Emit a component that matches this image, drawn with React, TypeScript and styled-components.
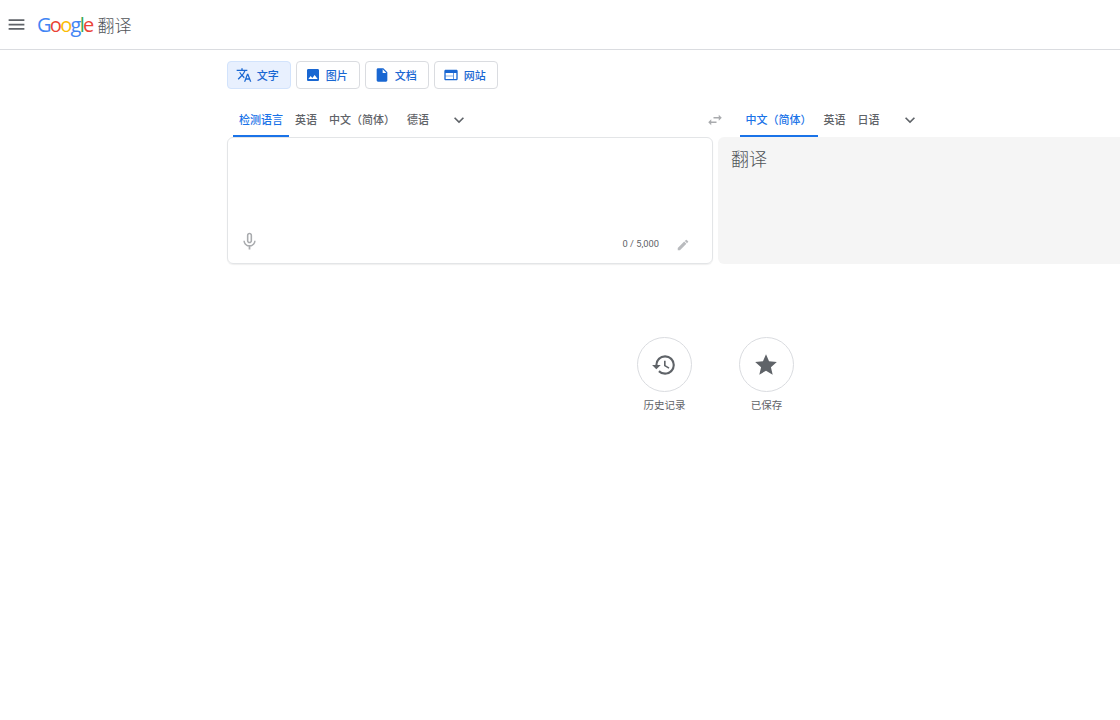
import React from "react";
import styled, { createGlobalStyle } from "styled-components";
import { MdMenu, MdTranslate, MdImage, MdInsertDriveFile, MdWeb, MdSwapHoriz, MdMicNone, MdEdit, MdHistory, MdStar, MdKeyboardArrowDown } from "react-icons/md";

const Global = createGlobalStyle`
  html, body { margin: 0; padding: 0; background: #fff; overflow: hidden; width: 1120px; height: 720px; }
  body { font-family: Roboto, "Noto Sans CJK SC", sans-serif; color: #5f6368; }
`;
const Page = styled.div`width: 1120px; height: 720px; overflow: hidden; display: flex; flex-direction: column;`;
const Header = styled.header`height: 49px; border-bottom: 1px solid #dadce0; display: flex; align-items: center; padding-left: 6px; flex: none;`;
const MenuIcon = styled(MdMenu)`font-size: 21px; color: #5f6368;`;
const Logo = styled.div`margin-left: 10px; display: flex; align-items: center; gap: 5px;`;
const LogoWord = styled.span`font-family: "Open Sans", sans-serif; font-size: 20px; letter-spacing: -1.7px; line-height: 24px; font-weight: 500;`;
const Letter = styled.span<{ $c: string }>`color: ${p => p.$c};`;
const LogoTitle = styled.span`font-family: "Noto Sans CJK SC", sans-serif; font-size: 17px; font-weight: 300; color: #505458; line-height: 24px;`;
const Main = styled.main`padding-left: 227px; display: flex; flex-direction: column;`;
const Tabs = styled.div`display: flex; gap: 5.5px; margin-top: 11px;`;
const Tab = styled.button<{ $active?: boolean }>`
  width: 63.5px; height: 28px; box-sizing: border-box; border-radius: 4px; padding: 0 3px 0 0; display: flex; align-items: center; justify-content: center; gap: 5px;
  background: ${p => p.$active ? "#e8f0fe" : "#fff"}; border: 1px solid ${p => p.$active ? "#d2e3fc" : "#dadce0"};
  color: #1967d2; font-family: Roboto, "Noto Sans CJK SC", sans-serif; font-size: 11px; font-weight: 500;
  svg { font-size: 16px; }
`;
const LangGrid = styled.div`display: grid; grid-template-columns: 486px 491px; column-gap: 5px; margin-top: 12px; width: 982px;`;
const LangBar = styled.div`display: flex; height: 36px; align-items: stretch; box-sizing: border-box;`;
const LeftBar = styled(LangBar)`padding-left: 6px;`;
const Lang = styled.div<{ $active?: boolean; $gap?: number }>`
  display: flex; align-items: center; padding: 1px 6px 0; font-size: 11px; font-weight: 500; white-space: nowrap; box-sizing: border-box;
  color: ${p => p.$active ? "#1a73e8" : "#5f6368"};
  border-bottom: 2px solid ${p => p.$active ? "#1a73e8" : "transparent"};
  margin-right: ${p => p.$gap ?? 0}px;
`;
const Chevron = styled(MdKeyboardArrowDown)`font-size: 20px; align-self: center; color: #5f6368; margin-top: 1px;`;
const Swap = styled(MdSwapHoriz)`font-size: 18px; color: #a9abae; align-self: center; margin-left: -12px; margin-right: 15.5px; margin-top: 1px; flex: none;`;
const Panels = styled.div`display: grid; grid-template-columns: 486px 491px; column-gap: 5px; width: 982px;`;
const SourcePanel = styled.div`height: 127px; box-sizing: border-box; border: 1px solid #e3e5e7; border-radius: 6px; display: flex; align-items: flex-end; justify-content: space-between; box-shadow: 0 1px 1px rgba(60,64,67,.08);`;
const TargetPanel = styled.div`height: 127px; box-sizing: border-box; background: #f5f5f5; border-radius: 6px 0 0 6px; padding: 8px 13px; font-family: "Noto Sans CJK SC", sans-serif; font-size: 18px; font-weight: 300; line-height: 26px; color: #505458;`;
const Mic = styled(MdMicNone)`font-size: 21px; color: #a9abae; margin: 0 0 11px 11px;`;
const Counter = styled.div`display: flex; align-items: center; margin: 0 22px 11px 0; font-size: 9.3px; color: #5f6368;`;
const Pen = styled(MdEdit)`font-size: 14px; color: #b9bbbe; margin-left: 17px; margin-top: 3px;`;
const Shortcuts = styled.div`display: flex; gap: 47px; margin: 73px 0 0 410px;`;
const Shortcut = styled.div`width: 55px; display: flex; flex-direction: column; align-items: center;`;
const Circle = styled.div`width: 55px; height: 55px; box-sizing: border-box; border-radius: 50%; border: 1px solid #dadce0; display: flex; align-items: center; justify-content: center; color: #5f6368; svg { font-size: 26px; margin-left: -1px; }`;
const Label = styled.div`margin-top: 7px; font-size: 10.5px; line-height: 14px; white-space: nowrap; color: #5f6368; font-weight: 400;`;

export default function App() {
  return (
    <Page>
      <Global />
      <Header>
        <MenuIcon />
        <Logo>
          <LogoWord>
            <Letter $c="#4285f4">G</Letter><Letter $c="#ea4335">o</Letter><Letter $c="#fbbc05">o</Letter><Letter $c="#4285f4">g</Letter><Letter $c="#34a853">l</Letter><Letter $c="#ea4335">e</Letter>
          </LogoWord>
          <LogoTitle>翻译</LogoTitle>
        </Logo>
      </Header>
      <Main>
        <Tabs>
          <Tab $active><MdTranslate />文字</Tab>
          <Tab><MdImage />图片</Tab>
          <Tab><MdInsertDriveFile />文档</Tab>
          <Tab><MdWeb />网站</Tab>
        </Tabs>
        <LangGrid>
          <LeftBar>
            <Lang $active>检测语言</Lang>
            <Lang>英语</Lang>
            <Lang>中文（简体）</Lang>
            <Lang $gap={14}>德语</Lang>
            <Chevron />
          </LeftBar>
          <LangBar>
            <Swap />
            <Lang $active>中文（简体）</Lang>
            <Lang>英语</Lang>
            <Lang $gap={14}>日语</Lang>
            <Chevron />
          </LangBar>
        </LangGrid>
        <Panels>
          <SourcePanel>
            <Mic />
            <Counter>0 / 5,000<Pen /></Counter>
          </SourcePanel>
          <TargetPanel>翻译</TargetPanel>
        </Panels>
        <Shortcuts>
          <Shortcut><Circle><MdHistory /></Circle><Label>历史记录</Label></Shortcut>
          <Shortcut><Circle><MdStar /></Circle><Label>已保存</Label></Shortcut>
        </Shortcuts>
      </Main>
    </Page>
  );
}
